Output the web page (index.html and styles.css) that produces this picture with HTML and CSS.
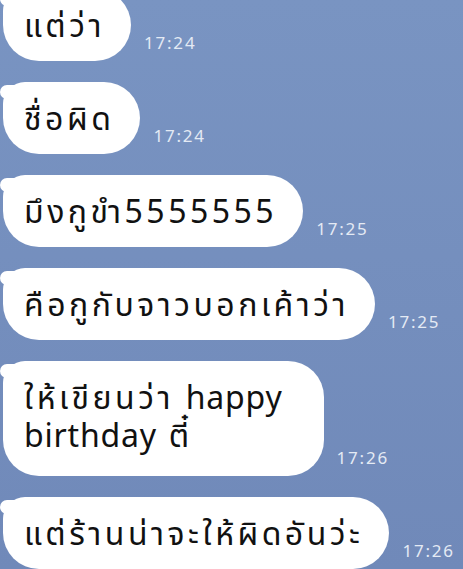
FILE: index.html
```html
<!DOCTYPE html>
<html lang="th">
<head>
    <meta charset="UTF-8">
    <meta name="viewport" content="width=device-width, initial-scale=1.0">
    <title>Chat</title>
    <link rel="stylesheet" href="styles.css">
</head>
<body>

<div class="chat">
    <div class="row">
        <div class="bubble">แต่ว่า</div>
        <span class="time">17:24</span>
    </div>
    <div class="row">
        <div class="bubble">ชื่อผิด</div>
        <span class="time">17:24</span>
    </div>
    <div class="row">
        <div class="bubble">มึงกูขำ5555555</div>
        <span class="time">17:25</span>
    </div>
    <div class="row">
        <div class="bubble">คือกูกับจาวบอกเค้าว่า</div>
        <span class="time">17:25</span>
    </div>
    <div class="row">
        <div class="bubble multi">ให้เขียนว่า <span class="latin">happy</span><br><span class="latin">birthday</span> ตี๋</div>
        <span class="time">17:26</span>
    </div>
    <div class="row">
        <div class="bubble">แต่ร้านน่าจะให้ผิดอันว่ะ</div>
        <span class="time">17:26</span>
    </div>
</div>

</body>
</html>
```

FILE: styles.css
```css
body {
    margin: 0;
    padding: 0;
    height: 569px;
    overflow: hidden;
    font-family: 'Noto Sans', 'Noto Sans Thai', sans-serif;
    background: linear-gradient(to bottom, #7994c2, #7089b9);
    color: #111;
}
.chat {
    display: flex;
    flex-direction: column;
    gap: 21px;
    margin-top: -11px;
    padding-left: 3px;
}
.row {
    display: flex;
    align-items: flex-end;
    gap: 13px;
}
.bubble {
    position: relative;
    background-color: #fff;
    border-radius: 22px 36px 36px 36px;
    padding: 17px 26px 17px 21px;
    font-size: 32px;
    line-height: 38px;
    letter-spacing: 3.5px;
    white-space: nowrap;
}
.bubble.multi {
    padding-right: 41px;
    padding-bottom: 22px;
}
.latin {
    letter-spacing: 0.8px;
}
/* little tail at the top left */
.bubble::before {
    content: '';
    position: absolute;
    left: -3px;
    top: 3px;
    width: 16px;
    height: 14px;
    background-color: #fff;
    border-radius: 8px 0 0 8px;
}
.time {
    font-size: 17px;
    letter-spacing: 1.8px;
    color: #e4eaf4;
    margin-bottom: 7px;
}
```
